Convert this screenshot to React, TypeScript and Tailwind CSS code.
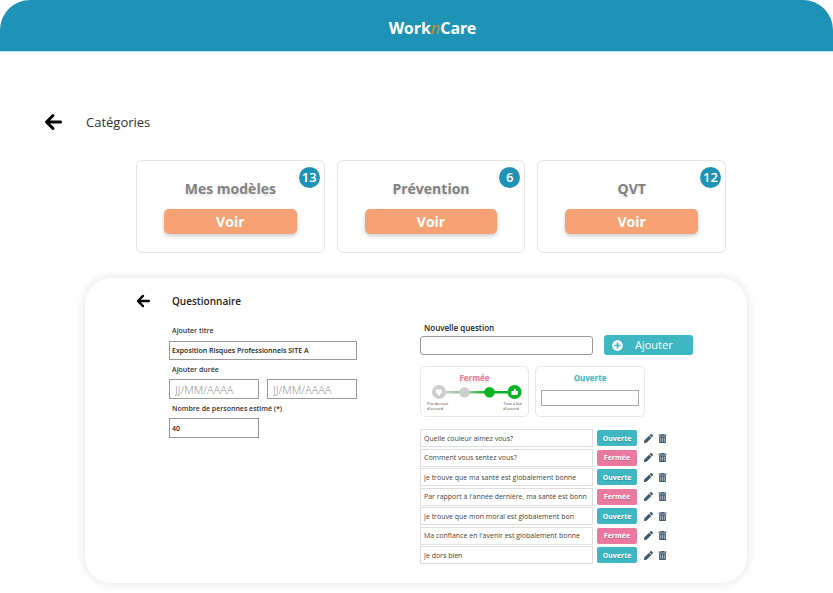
import React from "react";
import { FaPen, FaPlusCircle, FaTrashAlt } from "react-icons/fa";

type Kind = "Ouverte" | "Fermée";

const categories = [
  { name: "Mes modèles", count: 13 },
  { name: "Prévention", count: 6 },
  { name: "QVT", count: 12 },
];

const questions: { text: string; kind: Kind }[] = [
  { text: "Quelle couleur aimez vous?", kind: "Ouverte" },
  { text: "Comment vous sentez vous?", kind: "Fermée" },
  { text: "Je trouve que ma santé est globalement bonne", kind: "Ouverte" },
  { text: "Par rapport à l'année dernière, ma santé est bonn", kind: "Fermée" },
  { text: "Je trouve que mon moral est globalement bon", kind: "Ouverte" },
  { text: "Ma confiance en l'avenir est globalement bonne", kind: "Fermée" },
  { text: "Je dors bien", kind: "Ouverte" },
];

function BackArrow({ className }: { className: string }) {
  return (
    <svg viewBox="0 0 18 18" className={className} fill="none" stroke="#000" strokeWidth="3" strokeLinecap="round" strokeLinejoin="round" aria-hidden="true">
      <path d="M9 2.500 2.500 9 9 15.500M3 9h13.500" />
    </svg>
  );
}

function ScaleDrawing() {
  return (
    <svg viewBox="0 0 90 14" className="h-[14px] w-[90px]" aria-hidden="true">
      <defs>
        <linearGradient id="fadeIn" x1="0" x2="1">
          <stop offset="0" stopColor="#cdcdcd" />
          <stop offset="1" stopColor="#8fc893" />
        </linearGradient>
        <linearGradient id="fadeOut" x1="0" x2="1">
          <stop offset="0" stopColor="#8ccb90" />
          <stop offset="1" stopColor="#07b31f" />
        </linearGradient>
      </defs>
      <rect x="12" y="6" width="18" height="2.500" fill="url(#fadeIn)" />
      <rect x="36" y="6" width="18" height="2.500" fill="url(#fadeOut)" />
      <rect x="60" y="6" width="18" height="2.500" fill="#07b31f" />
      <circle cx="7" cy="7" r="7" fill="#cdcdcd" />
      <path d="M4 4.500h5l1 1v3H8.500L7.500 11 6 10V8.500H4z" fill="#fff" />
      <circle cx="32.500" cy="7.200" r="5.200" fill="#cdcdcd" />
      <circle cx="57.500" cy="7.200" r="5.200" fill="#07b31f" />
      <circle cx="82.500" cy="7" r="7" fill="#07b31f" />
      <path d="M79.500 6h2l1-2.500 1.500 1V6H86v3l-1 1h-5.500z" fill="#fff" />
    </svg>
  );
}

const fieldClass =
  "w-full border border-[#999] bg-white px-[2px] text-[7px] font-semibold text-[#222] outline-none";
const dateClass =
  "h-5 w-full min-w-0 border border-[#999] bg-white px-[5px] text-[11px] font-light text-[#777] outline-none placeholder:text-[#888] placeholder:opacity-100";
const labelClass = "block px-[3px] text-[7px] leading-[10px] font-semibold text-[#333]";

export default function App() {
  return (
    <div className="bg-white pb-[10px] font-['Open_Sans','Noto_Sans',sans-serif]">
      <header className="flex h-[52px] items-center justify-center rounded-t-[30px] border-b border-[#b5e5ee] bg-[#1f93b5] pt-1 pl-8">
        <div className="flex font-['Noto_Sans',sans-serif] text-[16px] leading-6 font-bold text-white">
          <span>Work</span>
          <span className="font-normal text-[#c98f2c] italic">n</span>
          <span>Care</span>
        </div>
      </header>

      <main>
        <div className="mt-[60px] flex h-5 items-center gap-6 pl-11">
          <button type="button" aria-label="Retour">
            <BackArrow className="h-[18px] w-[18px]" />
          </button>
          <h1 className="text-[13px] leading-5 font-normal text-[#333]">Catégories</h1>
        </div>

        <section className="mt-7 mr-[107px] ml-[136px] grid grid-cols-3 gap-3">
          {categories.map((c) => (
            <article key={c.name} className="relative flex h-[93px] flex-col items-center rounded-md border border-[#e5e5e5] bg-white pt-[18px]">
              <span className="absolute top-1.5 right-1 flex h-[21px] w-[21px] items-center justify-center rounded-full bg-[#1f93b5] text-[13px] leading-none font-semibold text-white">
                {c.count}
              </span>
              <h2 className="text-[14px] leading-5 font-bold text-[#828282] text-shadow-[0_2px_3px_rgba(0,0,0,0.12)]">{c.name}</h2>
              <button type="button" className="mt-[10px] h-[25px] w-[71%] rounded-[5px] bg-[#f5a173] text-[14px] leading-5 font-bold text-white shadow-[0_2px_4px_rgba(0,0,0,0.2)]">
                Voir
              </button>
            </article>
          ))}
        </section>

        <section className="mt-[25px] mr-[86px] ml-[85px] rounded-[26px] bg-white pt-[15px] pr-[54px] pb-[19px] pl-[51px] shadow-[0_0_10px_rgba(0,0,0,0.12)]">
          <div className="flex h-4 items-center gap-[22px]">
            <button type="button" aria-label="Retour au questionnaire">
              <BackArrow className="h-[14px] w-[14px]" />
            </button>
            <h2 className="text-[10px] leading-4 font-semibold text-[#222]">Questionnaire</h2>
          </div>

          <div className="flex justify-between pt-px pl-[33px]">
            <form className="w-[188px] pt-4" onSubmit={(e) => e.preventDefault()}>
              <label htmlFor="titre" className={labelClass}>Ajouter titre</label>
              <input id="titre" className={`${fieldClass} mt-[5px] block h-[19px]`} defaultValue="Exposition Risques Professionnels SITE A" />
              <label htmlFor="debut" className={`${labelClass} mt-[5px]`}>Ajouter durée</label>
              <div className="mt-[4px] grid grid-cols-2 gap-2">
                <input id="debut" className={dateClass} placeholder="JJ/MM/AAAA" />
                <input aria-label="Date de fin" className={dateClass} placeholder="JJ/MM/AAAA" />
              </div>
              <label htmlFor="nombre" className={`${labelClass} mt-[5px]`}>Nombre de personnes estimé (*)</label>
              <div className="mt-[4px] grid grid-cols-2 gap-2">
                <input id="nombre" className={`${fieldClass} h-5`} defaultValue="40" />
              </div>
            </form>

            <div className="w-[273px] pt-3">
              <label htmlFor="question" className="block px-1 text-[8px] leading-3 font-semibold text-[#222]">Nouvelle question</label>
              <div className="mt-px flex items-center justify-between">
                <input id="question" className="mt-px h-[19px] w-[173px] rounded-[3px] border border-[#999] bg-white px-1 text-[8px] outline-none" />
                <button type="button" className="flex h-5 w-[89px] items-center gap-3 rounded-[3px] bg-[#3eb7c3] pl-2 text-[11px] leading-4 font-normal text-white">
                  <FaPlusCircle className="h-[11px] w-[11px]" />
                  Ajouter
                </button>
              </div>

              <div className="mt-[11px] flex gap-1.5">
                <div className="flex h-[51px] w-[109px] flex-col items-center rounded-[5px] border border-[#e8e8e8] pt-[5px]">
                  <h3 className="text-[8px] leading-3 font-bold text-[#e8799d] text-shadow-[0_2px_2px_rgba(0,0,0,0.12)]">Fermée</h3>
                  <div className="mt-px flex pl-1">
                    <ScaleDrawing />
                  </div>
                  <div className="mt-[2px] flex w-full justify-between px-[6px] text-[4px] leading-[5px] text-[#444]">
                    <p>Pas du tout<br />d'accord</p>
                    <p>Tout à fait<br />d'accord</p>
                  </div>
                </div>
                <div className="flex h-[51px] w-[110px] flex-col items-center rounded-[5px] border border-[#e8e8e8] px-[5px] pt-[5px]">
                  <h3 className="text-[8px] leading-3 font-bold text-[#3eb7c3] text-shadow-[0_2px_2px_rgba(0,0,0,0.12)]">Ouverte</h3>
                  <input aria-label="Réponse ouverte" className="mt-[6px] h-4 w-full border border-[#aaa] bg-white px-1 text-[7px] outline-none" />
                </div>
              </div>

              <ul className="mt-3 flex h-[135px] flex-col justify-between">
                {questions.map((q) => (
                  <li key={q.text} className="flex h-[18px] items-center">
                    <input
                      aria-label="Question"
                      defaultValue={q.text}
                      className="h-[18px] w-[173px] border border-[#dedede] bg-white px-[3px] text-[7px] text-[#444] outline-none"
                    />
                    <span
                      className={`ml-1 flex h-4 w-10 items-center justify-center rounded-[2px] text-[7px] leading-none font-bold text-white text-shadow-[0_1px_1px_rgba(0,0,0,0.2)] ${q.kind === "Ouverte" ? "bg-[#3eb7c3]" : "bg-[#ea789f]"}`}
                    >
                      {q.kind}
                    </span>
                    <button type="button" aria-label="Modifier" className="ml-[7px] text-[#3f586e]">
                      <FaPen className="h-[9px] w-[9px]" />
                    </button>
                    <button type="button" aria-label="Supprimer" className="ml-[5px] text-[#3f586e]">
                      <FaTrashAlt className="h-[9px] w-[9px]" />
                    </button>
                  </li>
                ))}
              </ul>
            </div>
          </div>
        </section>
      </main>
    </div>
  );
}
